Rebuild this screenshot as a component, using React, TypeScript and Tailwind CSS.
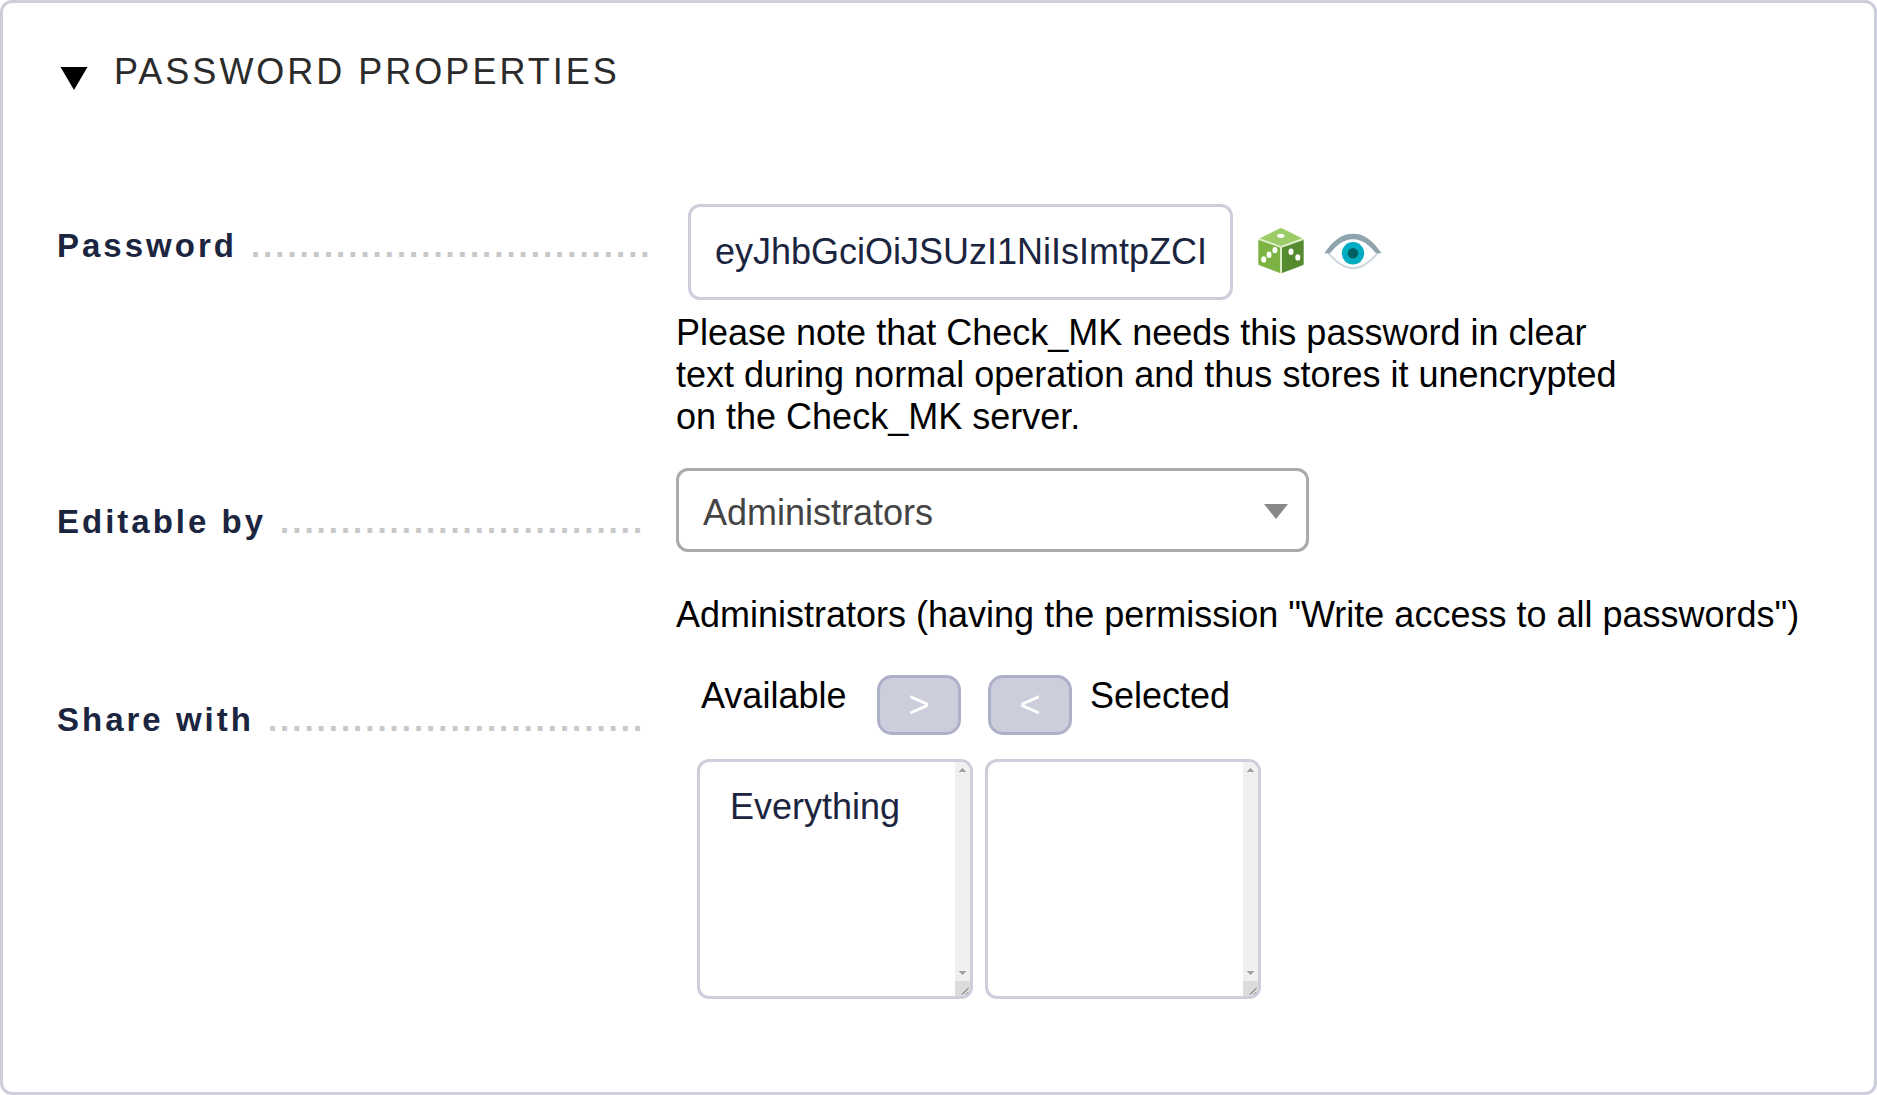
import React from 'react';

function Label({ text, dots }: { text: string; dots: number }) {
  return (
    <div className="w-[619px] shrink-0 whitespace-nowrap text-[33px] leading-[38px] font-bold tracking-[3px] text-[#1b2540]">
      {text}
      <span className="ml-[14px] text-[#c8c8c8]">{'.'.repeat(dots)}</span>
    </div>
  );
}

function Dice() {
  return (
    <svg className="block h-[48px] w-[48px]" viewBox="0 0 48 48">
      <path d="M22.5 1.5 Q24 0.8 25.5 1.5 L45.5 11.5 L24 20.5 L2.5 11.5Z" fill="#9ccc65" />
      <path d="M1.3 12.5 L23.5 19.5 V46.3 L2.3 38.3 Q1.3 37.8 1.3 36.8Z" fill="#7cb342" />
      <path d="M46.7 12.5 L24.5 19.5 V46.3 L45.7 38.3 Q46.7 37.8 46.7 36.8Z" fill="#558b2f" />
      <path d="M1.8 12 L24 20 L46.2 12 M24 19.5 V46.3" fill="none" stroke="#dcedc8" strokeWidth="2" />
      <ellipse cx="23.8" cy="8.8" rx="3.7" ry="2" fill="#fff" />
      <ellipse cx="6.7" cy="32.4" rx="2.5" ry="3.2" fill="#fff" />
      <ellipse cx="12.1" cy="27.8" rx="2.5" ry="3.2" fill="#fff" />
      <ellipse cx="17.9" cy="23.1" rx="2.5" ry="3.2" fill="#fff" />
      <ellipse cx="34" cy="24.7" rx="2.5" ry="3.2" fill="#fff" />
      <ellipse cx="40.8" cy="30.4" rx="2.5" ry="3.2" fill="#fff" />
    </svg>
  );
}

function Eye() {
  return (
    <svg className="block h-[40px] w-[60px]" viewBox="0 0 60 40">
      <path d="M4 20.5 C11 29 20 37.3 30 37.3 S49 29 56 20.5" fill="#fff" stroke="#cfd8dc" strokeWidth="2" />
      <path d="M1.2 22.3 C10 10 18 2.8 30 2.8 S50 10 58.6 22.3 H53 C47 15 40 8.2 30 8.2 S13 15 7 22.3Z" fill="#90a4ae" />
      <circle cx="30" cy="22.3" r="11.2" fill="#00acc1" />
      <circle cx="30" cy="22.3" r="5.2" fill="#006064" />
    </svg>
  );
}

function ListBox({ items }: { items: string[] }) {
  return (
    <div className="flex h-[240px] w-[276px] overflow-hidden rounded-[12px] border-3 border-[#cccedc]">
      <ul className="flex-1 pt-[24px] pl-[30px] text-[#1b2540]">
        {items.map((item) => (
          <li key={item}>{item}</li>
        ))}
      </ul>
      <div className="flex w-[15px] flex-col bg-[#f0f0f0]">
        <svg className="block h-[219px] w-[15px]" viewBox="0 0 15 219" fill="#a3a3a3" shapeRendering="crispEdges">
          <path d="M7 6h1v1h1v1h1v1h1v1H4V9h1V8h1V7h1z" />
          <path d="M4 209h7v1h-1v1h-1v1h-1v1H7v-1H6v-1H5v-1H4z" />
        </svg>
        <svg className="block h-[15px] w-[15px] bg-[#dcdcdc]" viewBox="0 0 15 15">
          <path d="M7 13.5 L13.5 7 M11 13.5 L13.5 11" stroke="#555" strokeWidth="1" />
        </svg>
      </div>
    </div>
  );
}

function MoveButton({ children }: { children: string }) {
  return (
    <button className="flex h-[60px] w-[84px] items-center justify-center rounded-[15px] border-3 border-[#aeb0c8] bg-[#cccedc] text-white">
      {children}
    </button>
  );
}

export default function App() {
  return (
    <main className="h-[1095px] w-[1877px] overflow-hidden rounded-[12px] border-3 border-[#cccedc] bg-white pl-[54px] font-['Liberation_Sans',sans-serif] text-[36px] leading-[42px] text-black">
      <header className="flex h-[201px] pt-[48px]">
        <svg className="mt-[15px] ml-[3px] block h-[25px] w-[28px]" viewBox="0 0 28 25">
          <path d="M0.5 1 H27.5 L14 24Z" />
        </svg>
        <h1 className="ml-[26px] tracking-[3px] text-[#2b2b2b]">PASSWORD PROPERTIES</h1>
      </header>

      <section className="flex h-[264px]">
        <div className="pt-[23px]">
          <Label text="Password" dots={33} />
        </div>
        <div>
          <div className="flex">
            <div className="ml-[12px] flex h-[96px] w-[545px] items-center overflow-hidden rounded-[12px] border-3 border-[#cccedc] pl-[24px] whitespace-nowrap text-[#1b2540]">
              eyJhbGciOiJSUzI1NiIsImtpZCI
            </div>
            <div className="mt-[23px] ml-[24px]">
              <Dice />
            </div>
            <div className="mt-[27px] ml-[18px]">
              <Eye />
            </div>
          </div>
          <p className="mt-[12px] whitespace-nowrap">
            Please note that Check_MK needs this password in clear
            <br />
            text during normal operation and thus stores it unencrypted
            <br />
            on the Check_MK server.
          </p>
        </div>
      </section>

      <section className="flex h-[207px]">
        <div className="pt-[35px]">
          <Label text="Editable by" dots={30} />
        </div>
        <div>
          <div className="flex h-[84px] w-[633px] items-center justify-between rounded-[12px] border-3 border-[#aaa] pr-[18px] pl-[24px] text-[#444]">
            <span className="pt-[6px]">Administrators</span>
            <svg className="mt-[3px] block h-[15px] w-[24px]" viewBox="0 0 24 15" fill="#888">
              <path d="M0 0 H24 L12 15Z" />
            </svg>
          </div>
          <p className="mt-[42px] whitespace-nowrap">
            Administrators (having the permission "Write access to all passwords")
          </p>
        </div>
      </section>

      <section className="flex">
        <div className="pt-[26px]">
          <Label text="Share with" dots={31} />
        </div>
        <div>
          <div className="flex h-[84px] items-start pl-[25px]">
            <span className="w-[176px]">Available</span>
            <MoveButton>&gt;</MoveButton>
            <span className="w-[27px]" />
            <MoveButton>&lt;</MoveButton>
            <span className="ml-[18px]">Selected</span>
          </div>
          <div className="flex gap-[12px] pl-[21px]">
            <ListBox items={['Everything']} />
            <ListBox items={[]} />
          </div>
        </div>
      </section>
    </main>
  );
}
